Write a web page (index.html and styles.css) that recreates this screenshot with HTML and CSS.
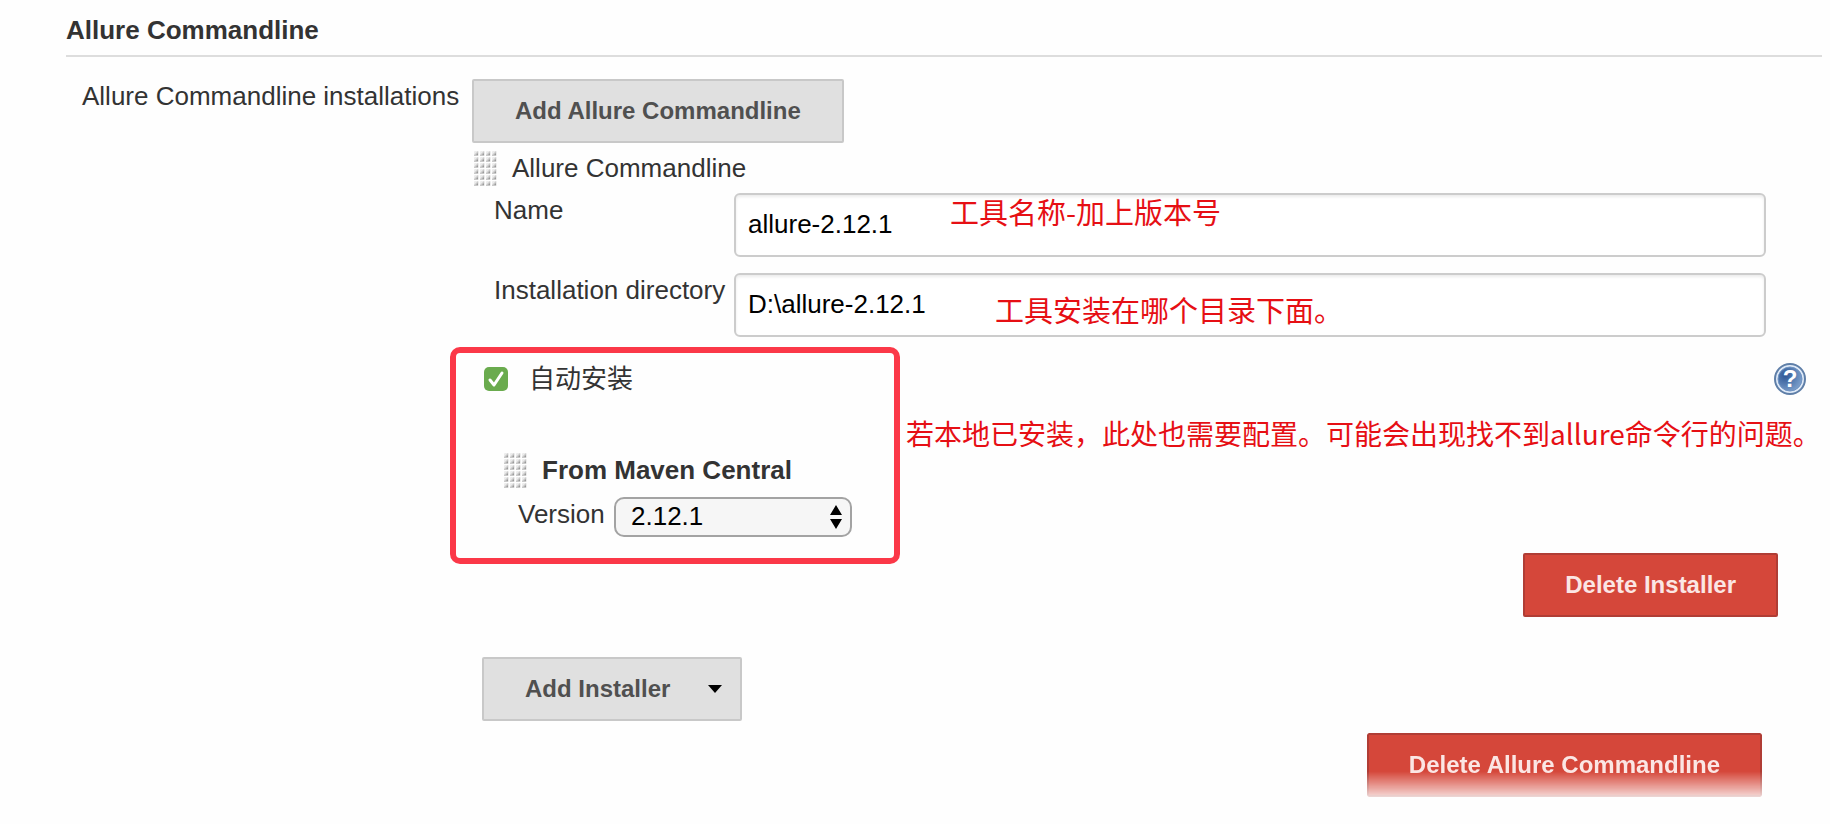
FILE: index.html
```html
<!DOCTYPE html>
<html lang="zh-CN">
<head>
  <meta charset="UTF-8">
  <title>Allure Commandline</title>
  <link rel="stylesheet" href="styles.css">
</head>
<body>

<!-- drag handle dots, reused by both blocks -->
<svg class="defs" width="0" height="0" aria-hidden="true">
  <defs>
    <pattern id="dots" width="6" height="6" patternUnits="userSpaceOnUse">
      <rect y="1" width="5" height="5" rx="1" fill="#ececec"/>
      <path d="M0 6 V5 L4 1 V6 Z" fill="#c9c9c9"/>
      <path d="M2 5 L4 3 V5 Z" fill="#9a9a9a"/>
    </pattern>
    <radialGradient id="help-fill" cx="0.3" cy="0.35" r="0.8">
      <stop offset="0" stop-color="#2d5795"/>
      <stop offset="1" stop-color="#83a5d0"/>
    </radialGradient>
  </defs>
</svg>

<section class="section">
  <h1 class="section-title">Allure Commandline</h1>

  <form class="setting">
    <div class="setting-label">Allure Commandline installations</div>
    <div class="setting-main">
      <button type="button" class="btn">Add Allure Commandline</button>

      <div class="block-title">
        <svg class="handle" width="23" height="36" aria-hidden="true"><rect width="23" height="36" fill="url(#dots)"/></svg>
        <span>Allure Commandline</span>
      </div>

      <div class="field">
        <label for="name">Name</label>
        <input type="text" id="name" value="allure-2.12.1">
        <span class="note note-name">工具名称-加上版本号</span>
      </div>
      <div class="field">
        <label for="home">Installation directory</label>
        <input type="text" id="home" value="D:\allure-2.12.1">
        <span class="note note-home">工具安装在哪个目录下面。</span>
      </div>

      <!-- Auto install -->
      <div class="installer">
        <div class="auto-row">
          <span class="check">
            <input type="checkbox" id="auto" checked>
            <svg viewBox="0 0 24 24" aria-hidden="true"><path d="M6 13 L10 18 L18 6" fill="none" stroke="#fff" stroke-width="3" stroke-linecap="round" stroke-linejoin="round"/></svg>
          </span>
          <label for="auto">自动安装</label>
          <a href="#" class="help" aria-label="Help">
            <svg width="32" height="32" viewBox="0 0 32 32">
              <circle cx="16" cy="16" r="15" fill="#dfeaf8" stroke="#5f7fa8" stroke-width="2"/>
              <circle cx="16" cy="16" r="12" fill="url(#help-fill)" stroke="#6f93c2" stroke-width="1"/>
              <text x="16" y="24" text-anchor="middle" class="help-mark">?</text>
            </svg>
          </a>
        </div>

        <div class="block-title maven">
          <svg class="handle" width="23" height="36" aria-hidden="true"><rect width="23" height="36" fill="url(#dots)"/></svg>
          <b>From Maven Central</b>
        </div>
        <div class="version">
          <label for="version">Version</label>
          <div class="select">
            <select id="version">
              <option>2.12.1</option>
            </select>
            <svg width="12" height="24" viewBox="0 0 12 24" aria-hidden="true"><path d="M6 0 L12 10 H0 Z M0 14 H12 L6 24 Z"/></svg>
          </div>
        </div>
        <div class="highlight"></div>
        <span class="note note-installer">若本地已安装，此处也需要配置。可能会出现找不到allure命令行的问题。</span>
      </div>

      <div class="actions delete-installer">
        <button type="button" class="btn btn-danger">Delete Installer</button>
      </div>
      <div class="actions add-installer">
        <button type="button" class="btn btn-menu">Add Installer
          <svg width="14" height="8" viewBox="0 0 14 8" aria-hidden="true"><path d="M0 0 H14 L7 8 Z" fill="#000"/></svg>
        </button>
      </div>
      <div class="actions delete-tool">
        <button type="button" class="btn btn-danger faded">Delete Allure Commandline</button>
      </div>
    </div>
  </form>
</section>

</body>
</html>
```
FILE: styles.css
```css
* {
  box-sizing: border-box;
}
body {
  margin: 0;
  background: #fefefe;
  color: #333;
  font-family: "Liberation Sans", "Noto Sans CJK SC", sans-serif;
  font-size: 26px;
  line-height: 30px;
}
.defs {
  position: absolute;
}
.section {
  margin: 0 8px 0 66px;
}
.section-title {
  margin: 0;
  padding: 15px 0 10px;
  border-bottom: 2px solid #ddd;
  font-size: 26px;
  line-height: 30px;
}
.setting {
  display: flex;
  padding-top: 22px;
}
.setting-label {
  flex: 0 0 406px;
  padding: 2px 0 0 16px;
}
.setting-main {
  flex: 1;
  min-width: 0;
}

/* buttons */
.btn {
  display: inline-flex;
  align-items: center;
  height: 64px;
  padding: 0 41px;
  border: 2px solid #c8c8c8;
  border-radius: 2px;
  background: #e0e0e0;
  color: #505050;
  font-family: inherit;
  font-size: 24px;
  font-weight: bold;
  vertical-align: top;
  cursor: pointer;
}
.btn-danger {
  padding: 0 40px;
  background: #d5473a;
  border-color: #b03d35;
  color: #fbe6e4;
}
.btn-menu {
  gap: 38px;
  padding-right: 18px;
}
.faded {
  -webkit-mask-image: linear-gradient(#000 60%, rgba(0,0,0,0.2));
  mask-image: linear-gradient(#000 60%, rgba(0,0,0,0.2));
}

.block-title {
  display: flex;
  align-items: center;
  height: 50px;
  padding-left: 2px;
}
.handle {
  margin-right: 15px;
}

/* text fields */
.field {
  position: relative;
  display: flex;
  padding: 0 56px 0 22px;
  margin-bottom: 16px;
}
.field label {
  flex: 0 0 240px;
  padding-top: 2px;
}
.field input {
  flex: 1;
  min-width: 0;
  height: 64px;
  padding: 0 12px 2px;
  border: 2px solid #ccc;
  border-radius: 6px;
  background: #fff;
  box-shadow: inset 0 2px 3px rgba(0,0,0,0.08);
  color: #000;
  font-family: inherit;
  font-size: 26px;
}

/* red notes over the form */
.note {
  position: absolute;
  color: #e60f14;
  font-family: "Noto Sans CJK SC", sans-serif;
  font-size: 28px;
  line-height: 32px;
  white-space: nowrap;
}
.field .note {
  font-size: 29px;
}
.note-name {
  left: 478px;
  top: 2px;
}
.note-home {
  left: 523px;
  top: 20px;
}
.note-installer {
  left: 434px;
  top: 80px;
}
.highlight {
  position: absolute;
  left: -22px;
  top: 10px;
  width: 450px;
  height: 217px;
  border: 6px solid #fb3848;
  border-radius: 10px;
  pointer-events: none;
}

/* installer */
.installer {
  position: relative;
  margin-top: -16px;
  padding-top: 26px;
}
.auto-row {
  display: flex;
  align-items: center;
  height: 32px;
  padding: 0 16px 0 12px;
}
.check {
  position: relative;
  width: 24px;
  height: 24px;
  margin-right: 21px;
}
.check input {
  appearance: none;
  display: block;
  width: 24px;
  height: 24px;
  margin: 0;
  border-radius: 5px;
  background: #6aab4e;
}
.check svg {
  position: absolute;
  left: 0;
  top: 0;
  display: none;
  pointer-events: none;
}
.check input:checked + svg {
  display: block;
}
.help {
  height: 32px;
  margin-left: auto;
}
.help svg {
  display: block;
}
.help-mark {
  fill: #fff;
  font-size: 24px;
  font-weight: bold;
}
.maven {
  margin-top: 50px;
  padding-left: 32px;
}
.version {
  display: flex;
  margin-top: 2px;
  padding-left: 46px;
}
.version label {
  flex: 0 0 96px;
  padding-top: 2px;
}
.select {
  position: relative;
}
.select select {
  appearance: none;
  display: block;
  width: 238px;
  height: 40px;
  padding: 0 40px 2px 15px;
  border: 2px solid #a3a3a3;
  border-radius: 10px;
  background: #f6f6f6;
  color: #000;
  font-family: inherit;
  font-size: 26px;
}
.select svg {
  position: absolute;
  right: 10px;
  top: 8px;
  pointer-events: none;
}

.actions {
  display: flex;
}
.delete-installer {
  justify-content: flex-end;
  margin-top: 16px;
  padding-right: 44px;
}
.add-installer {
  margin-top: 40px;
  padding-left: 10px;
}
.delete-tool {
  justify-content: flex-end;
  margin-top: 12px;
  padding-right: 60px;
}
```
